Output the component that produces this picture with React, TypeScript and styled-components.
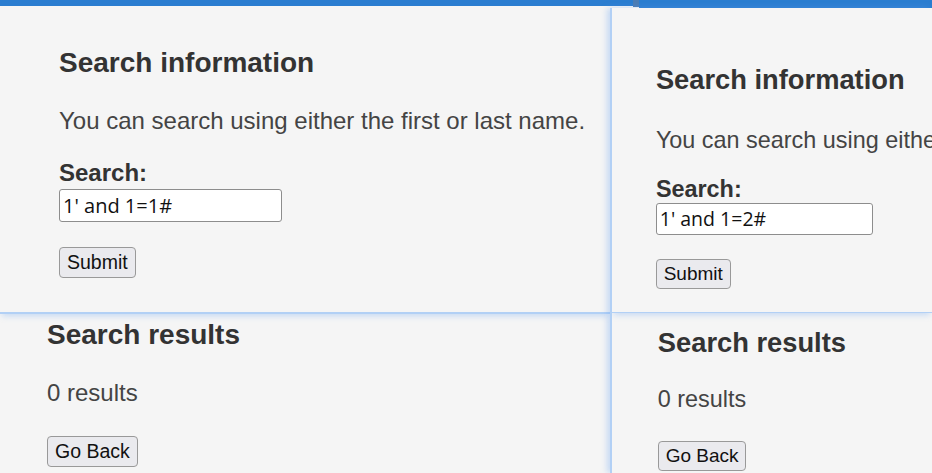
import React from "react";
import styled, { createGlobalStyle } from "styled-components";

const GlobalStyle = createGlobalStyle`
    html, body {
        margin: 0;
        padding: 0;
        background: #f5f5f5;
    }
    body {
        font-family: "Liberation Sans", Arial, sans-serif;
    }
`;

interface ISpacing {
    headingGap: number;
    textGap: number;
    labelGap: number;
}

interface IShotProps {
    scale: number;
    cardPadTop: number;
    cardPadLeft: number;
    cardPadBottom: number;
    resultsPadTop: number;
    resultsPadLeft: number;
    spacing: ISpacing;
    query: string;
}

const Page = styled.div`
    width: 932px;
    height: 473px;
    display: flex;
    flex-direction: column;
    overflow: hidden;
    background: #f5f5f5;
`;

const TopStrip = styled.div`
    height: 8px;
    display: flex;
    align-items: flex-start;
    flex: none;
`;

const BarSegment = styled.div<{ $w?: number; $h: number; $color: string }>`
    height: ${({ $h }) => $h}px;
    background: ${({ $color }) => $color};
    ${({ $w }) => ($w ? `width: ${$w}px; flex: none;` : "flex: 1;")}
`;

const Columns = styled.div`
    flex: 1;
    display: flex;
    min-height: 0;
`;

const Shot = styled.section<{ $side: "left" | "right" }>`
    position: relative;
    background: #f5f5f5;
    ${({ $side }) =>
        $side === "left"
            ? `
        width: 610px;
        flex: none;
    `
            : `
        flex: 1;
        min-width: 0;
        overflow: hidden;
        border-left: 2px solid #b2d0f5;
        box-shadow: -3px 0 6px rgba(110, 165, 240, 0.35);
    `}
`;

const Zoomed = styled.div<{ $scale: number }>`
    zoom: ${({ $scale }) => $scale};
`;

const Card = styled.div<{ $top: number; $left: number; $bottom: number }>`
    padding: ${({ $top, $left, $bottom }) => `${$top}px 0 ${$bottom}px ${$left}px`};
    border-bottom: 2px solid #b2d0f5;
    box-shadow: 0 4px 6px -2px rgba(110, 165, 240, 0.35);
    white-space: nowrap;
`;

const Heading = styled.h3<{ $mb: number }>`
    margin: 0 0 ${({ $mb }) => $mb}px;
    font-size: 28px;
    line-height: 32px;
    font-weight: bold;
    color: #333;
`;

const Text = styled.p<{ $mb: number }>`
    margin: 0 0 ${({ $mb }) => $mb}px;
    font-size: 24px;
    line-height: 28px;
    color: #444;
`;

const Label = styled.label<{ $mb: number }>`
    display: block;
    margin-bottom: ${({ $mb }) => $mb}px;
    font-size: 24px;
    line-height: 28px;
    font-weight: bold;
    color: #333;
`;

const Input = styled.input`
    display: block;
    box-sizing: border-box;
    width: 223px;
    height: 33px;
    padding: 0 3px;
    border: 1px solid #8d8d8d;
    border-radius: 3px;
    background: #fff;
    font-family: "Open Sans", "Liberation Sans", sans-serif;
    font-size: 20px;
    color: #111;
    outline: none;
`;

const Button = styled.button<{ $gap?: number }>`
    display: block;
    box-sizing: border-box;
    height: 31px;
    margin-top: ${({ $gap }) => $gap ?? 0}px;
    padding: 0 7px;
    border: 1px solid #999;
    border-radius: 4px;
    background: #eaeaee;
    font-family: "Liberation Sans", Arial, sans-serif;
    font-size: 19.5px;
    color: #111;
`;

const Results = styled.div<{ $top: number; $left: number }>`
    padding: ${({ $top, $left }) => `${$top}px 0 0 ${$left}px`};
    white-space: nowrap;
`;

const ScreenShot = ({
    scale,
    cardPadTop,
    cardPadLeft,
    cardPadBottom,
    resultsPadTop,
    resultsPadLeft,
    spacing,
    query,
}: IShotProps) => (
    <Zoomed $scale={scale}>
        <Card $top={cardPadTop} $left={cardPadLeft} $bottom={cardPadBottom}>
            <Heading $mb={spacing.headingGap}>Search information</Heading>
            <Text $mb={spacing.textGap}>You can search using either the first or last name.</Text>
            <Label $mb={spacing.labelGap}>Search:</Label>
            <Input defaultValue={query} />
            <Button $gap={25}>Submit</Button>
        </Card>
        <Results $top={resultsPadTop} $left={resultsPadLeft}>
            <Heading $mb={28}>Search results</Heading>
            <Text $mb={29}>0 results</Text>
            <Button>Go Back</Button>
        </Results>
    </Zoomed>
);

const App = () => {
    return (
        <Page>
            <GlobalStyle />
            <TopStrip>
                <BarSegment $w={633} $h={6} $color="#2a7dd0" />
                <BarSegment $w={6} $h={7} $color="#4a7cb4" />
                <BarSegment $h={8} $color="#2a7dd0" />
            </TopStrip>
            <Columns>
                <Shot $side="left">
                    <ScreenShot
                        scale={1}
                        cardPadTop={39}
                        cardPadLeft={59}
                        cardPadBottom={34}
                        resultsPadTop={5}
                        resultsPadLeft={47}
                        spacing={{ headingGap: 28, textGap: 24, labelGap: 2 }}
                        query="1' and 1=1#"
                    />
                </Shot>
                <Shot $side="right">
                    <ScreenShot
                        scale={0.975}
                        cardPadTop={57.6}
                        cardPadLeft={45}
                        cardPadBottom={23.6}
                        resultsPadTop={14.2}
                        resultsPadLeft={47}
                        spacing={{ headingGap: 32, textGap: 23, labelGap: -1 }}
                        query="1' and 1=2#"
                    />
                </Shot>
            </Columns>
        </Page>
    );
};

export default App;
